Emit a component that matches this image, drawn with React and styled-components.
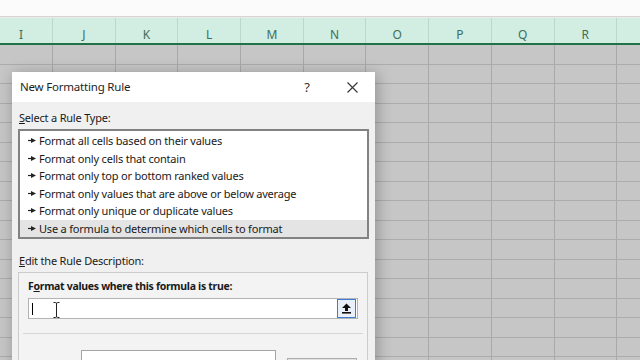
import React from "react";
import styled, { createGlobalStyle } from "styled-components";

const Global = createGlobalStyle`
  html, body { margin: 0; padding: 0; background: #fbfbfb; }
  body { overflow: hidden; font-family: "Segoe UI", "Noto Sans", "Liberation Sans", sans-serif; }
`;

const COLS = ["I", "J", "K", "L", "M", "N", "O", "P", "Q", "R", ""];
const COL_W = 62.7;
const ROWS = 17;

const Page = styled.div`
  position: relative;
  width: 640px;
  height: 360px;
  overflow: hidden;
  background: #fbfbfb;
`;

const TopBar = styled.div`
  height: 16px;
  background: #fbfbfb;
  border-bottom: 1px solid #d6d6d6;
`;

const Strip = styled.div`
  height: 1px;
  background: #ececec;
`;

const HeaderRow = styled.div`
  display: flex;
  height: 25px;
  margin-left: -9.7px;
  background: #d2ede2;
  border-bottom: 2px solid #237247;
`;

const ColHead = styled.div`
  flex: 0 0 ${COL_W}px;
  box-sizing: border-box;
  border-right: 1px solid #b9d9cb;
  display: flex;
  align-items: center;
  justify-content: center;
  padding-top: 8px;
  font-family: "Segoe UI", "Noto Sans", sans-serif;
  font-size: 12px;
  color: #3f6f58;
`;

const Sheet = styled.div`
  margin-left: -9.7px;
  background: #c6c6c6;
`;

const SheetRow = styled.div`
  display: flex;
  height: 19.5px;
  box-sizing: border-box;
  border-bottom: 1px solid #acacac;
`;

const Cell = styled.div`
  flex: 0 0 ${COL_W}px;
  box-sizing: border-box;
  border-right: 1px solid #a9a9a9;
`;

const Dialog = styled.div`
  position: absolute;
  left: 12px;
  top: 72px;
  width: 363px;
  height: 300px;
  background: #f0f0f0;
  box-shadow: 2px 2px 14px rgba(0, 0, 0, 0.28);
  display: flex;
  flex-direction: column;
  font-family: "Segoe UI", "Noto Sans", sans-serif;
  color: #1a1a1a;
`;

const TitleBar = styled.div`
  height: 30px;
  background: #ffffff;
  display: flex;
  align-items: center;
  padding-left: 8px;
  flex-shrink: 0;
`;

const Title = styled.div`
  flex: 1;
  font-size: 11.5px;
  letter-spacing: -0.2px;
  color: #1e1e1e;
  padding-bottom: 2px;
`;

const TitleBtn = styled.div`
  width: ${(p) => p.$w}px;
  display: flex;
  align-items: center;
  justify-content: center;
  font-size: 13px;
  color: #333;
`;

const Body = styled.div`
  padding: 8px 6px 0 6px;
  display: flex;
  flex-direction: column;
`;

const Label = styled.div`
  font-size: 11px;
  letter-spacing: -0.2px;
  line-height: 16px;
  color: #1a1a1a;
  margin-left: 1px;
  & u { text-decoration: underline; text-underline-offset: 1px; }
`;

const ListBox = styled.div`
  margin-top: 3px;
  width: 351px;
  height: 110px;
  box-sizing: border-box;
  border: 2px solid #828282;
  background: #ffffff;
  padding-top: 1px;
`;

const Item = styled.div`
  height: 17.5px;
  display: flex;
  align-items: center;
  padding-left: 8px;
  gap: 3px;
  font-size: 11px;
  letter-spacing: -0.2px;
  color: #1a1a1a;
  background: ${(p) => (p.$sel ? "#e4e4e4" : "#ffffff")};
`;

const DescLabel = styled(Label)`
  margin-top: 14px;
`;

const DescBox = styled.div`
  margin-top: 3px;
  width: 350px;
  height: 120px;
  box-sizing: border-box;
  border: 1px solid #cbcbcb;
  background: #f3f3f3;
  padding: 6px 10px 0 9px;
  display: flex;
  flex-direction: column;
`;

const BoldLabel = styled.div`
  font-size: 10.5px;
  font-weight: 700;
  letter-spacing: -0.3px;
  line-height: 15px;
  color: #1a1a1a;
  & u { text-decoration: underline; }
`;

const InputWrap = styled.div`
  position: relative;
  margin-top: 4px;
  height: 21px;
  width: 330px;
  box-sizing: border-box;
  border: 1px solid #b3b3b3;
  background: #ffffff;
  display: flex;
  align-items: center;
  justify-content: flex-end;
  padding-right: 1px;
`;

const Caret = styled.div`
  position: absolute;
  left: 3px;
  top: 4px;
  width: 1px;
  height: 12px;
  background: #000;
`;

const IBeam = styled.svg`
  position: absolute;
  left: 24px;
  top: 3px;
`;

const CollapseBtn = styled.div`
  width: 19px;
  height: 19px;
  box-sizing: border-box;
  border: 1px solid #3a7fd5;
  background: #e9f0fa;
  display: flex;
  align-items: center;
  justify-content: center;
`;

const Separator = styled.div`
  margin-top: 14px;
  margin-left: -5px;
  margin-right: -6px;
  height: 1px;
  background: #d6d6d6;
`;

const PreviewRow = styled.div`
  margin-top: 16px;
  display: flex;
  align-items: flex-start;
  gap: 11px;
  padding-left: 53px;
`;

const PreviewBox = styled.div`
  width: 195px;
  height: 30px;
  box-sizing: border-box;
  border: 1px solid #a5a5a5;
  background: #ffffff;
`;

const FormatBtn = styled.div`
  margin-top: 8px;
  width: 70px;
  height: 22px;
  box-sizing: border-box;
  border: 1px solid #adadad;
  background: #e1e1e1;
`;

const Arrow = () => (
  <svg width="8" height="7" viewBox="0 0 8 7">
    <line x1="0" y1="3.5" x2="4" y2="3.5" stroke="#222" strokeWidth="1.2" />
    <polygon points="3,1 8,3.5 3,6" fill="#222" />
  </svg>
);

const items = [
  "Format all cells based on their values",
  "Format only cells that contain",
  "Format only top or bottom ranked values",
  "Format only values that are above or below average",
  "Format only unique or duplicate values",
  "Use a formula to determine which cells to format",
];

export default function App() {
  return (
    <>
      <Global />
      <Page>
        <TopBar />
        <Strip />
        <HeaderRow>
          {COLS.map((c, i) => (
            <ColHead key={i}>{c}</ColHead>
          ))}
        </HeaderRow>
        <Sheet>
          {Array.from({ length: ROWS }).map((_, r) => (
            <SheetRow key={r}>
              {COLS.map((c, i) => (
                <Cell key={i} />
              ))}
            </SheetRow>
          ))}
        </Sheet>

        <Dialog>
          <TitleBar>
            <Title>New Formatting Rule</Title>
            <TitleBtn $w={44}>?</TitleBtn>
            <TitleBtn $w={46}>
              <svg width="11" height="11" viewBox="0 0 11 11">
                <path d="M0.5 0.5 L10.5 10.5 M10.5 0.5 L0.5 10.5" stroke="#333" strokeWidth="1.1" />
              </svg>
            </TitleBtn>
          </TitleBar>
          <Body>
            <Label>
              <u>S</u>elect a Rule Type:
            </Label>
            <ListBox>
              {items.map((t, i) => (
                <Item key={t} $sel={i === items.length - 1}>
                  <Arrow />
                  {t}
                </Item>
              ))}
            </ListBox>
            <DescLabel>
              <u>E</u>dit the Rule Description:
            </DescLabel>
            <DescBox>
              <BoldLabel>
                F<u>o</u>rmat values where this formula is true:
              </BoldLabel>
              <InputWrap>
                <Caret />
                <IBeam width="7" height="16" viewBox="0 0 7 16">
                  <path d="M0.5 0.5 H2.5 Q3.5 0.5 3.5 2 V14 Q3.5 15.5 2.5 15.5 H0.5 M6.5 0.5 H4.5 Q3.5 0.5 3.5 2 M3.5 14 Q3.5 15.5 4.5 15.5 H6.5" stroke="#222" strokeWidth="1" fill="none" />
                </IBeam>
                <CollapseBtn>
                  <svg width="11" height="11" viewBox="0 0 11 11">
                    <polygon points="5.5,0.5 10,5 7,5 7,8 4,8 4,5 1,5" fill="#111" />
                    <rect x="1" y="9" width="9" height="1.6" fill="#111" />
                  </svg>
                </CollapseBtn>
              </InputWrap>
              <Separator />
              <PreviewRow>
                <PreviewBox />
                <FormatBtn />
              </PreviewRow>
            </DescBox>
          </Body>
        </Dialog>
      </Page>
    </>
  );
}
